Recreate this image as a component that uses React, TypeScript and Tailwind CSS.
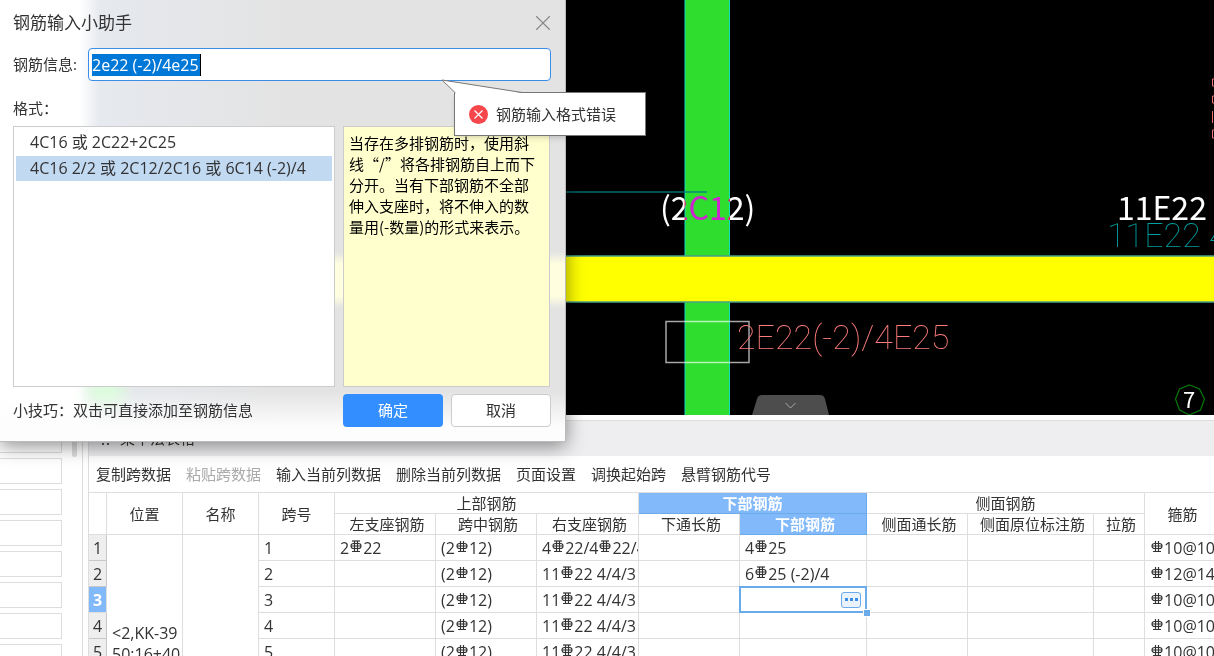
import { X } from "lucide-react";

const tools = [
    { label: "复制跨数据" },
    { label: "粘贴跨数据", disabled: true },
    { label: "输入当前列数据" },
    { label: "删除当前列数据" },
    { label: "页面设置" },
    { label: "调换起始跨" },
    { label: "悬臂钢筋代号" },
];

// "#" is the grade C sign, "$" the grade E sign
const rows = [
    { left: "2$22", mid: "(2#12)", right: "4$22/4$22/4", bottom: "4$25", stirrup: "#10@100" },
    { left: "", mid: "(2#12)", right: "11$22 4/4/3", bottom: "6$25 (-2)/4", stirrup: "#12@140" },
    { left: "", mid: "(2#12)", right: "11$22 4/4/3", bottom: "", stirrup: "#10@100" },
    { left: "", mid: "(2#12)", right: "11$22 4/4/3", bottom: "", stirrup: "#10@100" },
    { left: "", mid: "(2#12)", right: "11$22 4/4/3", bottom: "", stirrup: "#10@100" },
    { left: "", mid: "(2#12)", right: "11$22 4/4/3", bottom: "", stirrup: "#10@100" },
];

const activeRow = 2;

function RebarSign({ top }: { top: boolean }) {
    return (
        <svg className="inline-block w-3 h-[13px] mx-px align-[1px]" viewBox="0 0 12 13" fill="none" stroke="#333" strokeWidth="1.2">
            <rect x="1" y="3.5" width="10" height="5" rx="2.5" />
            <path d="M4.5 1V11.5M7.5 1V11.5M2 11.5H10M1 6H11" />
            {top && <path d="M2 1H10" />}
        </svg>
    );
}

function Rebar({ value }: { value: string }) {
    return (
        <>
            {value.split(/([#$])/).map((part, i) =>
                part === "#" || part === "$" ? <RebarSign key={i} top={part === "$"} /> : part
            )}
        </>
    );
}

function Canvas() {
    return (
        <div className="h-[415px] shrink-0 bg-black">
            <svg className="block w-full h-full">
                <rect x="597" width="45" height="100%" fill="#2edd2e" />
                <path d="M597 0V415M641.5 0V415" stroke="#14dcc0" />
                <path d="M0 192H619" stroke="#008080" strokeWidth="2" opacity="0.65" />
                <rect y="256" width="100%" height="46" fill="#ffff00" />
                <rect x="-10" y="256" width="1400" height="46" fill="none" stroke="#4aa08a" strokeWidth="1.5" />
                <rect x="578" y="321.5" width="83" height="41" fill="none" stroke="#fff" strokeWidth="1.5" opacity="0.65" />

                <g className="font-['Roboto'] font-thin text-[34px]">
                    <text x="649" y="349" fill="#ff7c7c">2E22(-2)/4E25</text>
                    <text x="1019" y="247" fill="#00a0a0">11E22 4</text>
                </g>
                <g className="font-['Noto_Sans_CJK_SC','Noto_Sans',sans-serif] text-[32px] mix-blend-difference" fill="#fff">
                    <text x="572" y="220">(2C12)</text>
                    <text x="1029" y="220">11E22 4</text>
                </g>
                <path d="M1128 79H1124.5V86H1128M1128 96H1124.5V103H1128M1124.5 111V123M1128 130H1124.5V138H1128" stroke="#f07070" fill="none" />

                <path d="M1101.500 385l10 4 5 10-4 11-11 5-10-5-4-11 4-10z" fill="none" stroke="#087808" strokeWidth="1.2" />
                <text x="1095" y="408" fill="#fff" className="font-['Noto_Sans_CJK_SC'] text-[22px]">7</text>

                <path d="M664 415l5-16q1-4 5-4h58q4 0 5 4l4 16z" fill="#4d4d4d" />
                <path d="M697.500 403l5 5 5-5" fill="none" stroke="#aaa" />
            </svg>
        </div>
    );
}

function SpanTable() {
    return (
        <table className="w-[1132px] table-fixed border-separate border-spacing-0 text-base leading-5 text-[#333] whitespace-nowrap [&_td]:h-[26px] [&_td]:p-0 [&_td]:border-r [&_td]:border-b [&_td]:border-[#dedede] [&_th]:p-0 [&_th]:border-r [&_th]:border-b [&_th]:border-[#dedede] [&_th]:font-normal">
            <colgroup>
                <col className="w-[18px]" />
                <col className="w-[76px]" />
                <col className="w-[76px]" />
                <col className="w-[76px]" />
                <col className="w-[101px]" />
                <col className="w-[101px]" />
                <col className="w-[102px]" />
                <col className="w-[101px]" />
                <col className="w-[127px]" />
                <col className="w-[101px]" />
                <col className="w-[126px]" />
                <col className="w-[51px]" />
                <col className="w-[76px]" />
            </colgroup>
            <thead className="text-[15px]">
                <tr className="h-[21px]">
                    <th rowSpan={2}></th>
                    <th rowSpan={2}>位置</th>
                    <th rowSpan={2}>名称</th>
                    <th rowSpan={2}>跨号</th>
                    <th colSpan={3}>上部钢筋</th>
                    <th colSpan={2} className="bg-[#82b9fb] text-white border-[#6cabea]! font-bold!">下部钢筋</th>
                    <th colSpan={3}>侧面钢筋</th>
                    <th rowSpan={2}>箍筋</th>
                </tr>
                <tr className="h-[21px] [&_th]:pl-1">
                    <th>左支座钢筋</th>
                    <th>跨中钢筋</th>
                    <th>右支座钢筋</th>
                    <th>下通长筋</th>
                    <th className="bg-[#82b9fb] text-white border-[#6cabea]! font-bold!">下部钢筋</th>
                    <th>侧面通长筋</th>
                    <th>侧面原位标注筋</th>
                    <th>拉筋</th>
                </tr>
            </thead>
            <tbody>
                {rows.map((row, i) => (
                    <tr key={i}>
                        <th className={i === activeRow ? "bg-[#82b9fb] text-white font-bold!" : "bg-[#eeeeee] border-[#c8c8c8]!"}>{i + 1}</th>
                        {i === 0 && (
                            <>
                                <td rowSpan={rows.length} className="align-top">
                                    <div className="pt-[88px] pl-[5px] leading-[21px]">&lt;2,KK-39<br />50:16+40</div>
                                </td>
                                <td rowSpan={rows.length}></td>
                            </>
                        )}
                        <td><div className="pl-[5px]">{i + 1}</div></td>
                        <td><div className="pl-[5px]"><Rebar value={row.left} /></div></td>
                        <td><div className="pl-[5px]"><Rebar value={row.mid} /></div></td>
                        <td><div className="pl-[5px] overflow-hidden"><Rebar value={row.right} /></div></td>
                        <td></td>
                        {i === activeRow ? (
                            <td className="relative">
                                <div className="absolute -inset-px border-2 border-[#6cabea] flex items-center justify-end pr-1">
                                    <button aria-label="更多" className="w-5 h-4 flex items-center justify-center gap-[2px] rounded-[3px] border border-[#6cabea] bg-[#eaf2fc]">
                                        <span className="w-[3px] h-[3px] bg-[#3b8ee8]" />
                                        <span className="w-[3px] h-[3px] bg-[#3b8ee8]" />
                                        <span className="w-[3px] h-[3px] bg-[#3b8ee8]" />
                                    </button>
                                </div>
                                <span className="absolute -right-1 -bottom-1 w-[6px] h-[6px] bg-[#6cabea] outline outline-white" />
                            </td>
                        ) : (
                            <td><div className="pl-[5px]"><Rebar value={row.bottom} /></div></td>
                        )}
                        <td></td>
                        <td></td>
                        <td></td>
                        <td><div className="pl-[5px] overflow-hidden"><Rebar value={row.stirrup} /></div></td>
                    </tr>
                ))}
            </tbody>
        </table>
    );
}

function ErrorTip() {
    return (
        <div role="alert" className="absolute left-[454px] top-[92px] w-48 h-11 flex items-center gap-2 pl-[14px] bg-white border border-[#777] shadow-md text-[15px] text-[#333]">
            <svg className="absolute left-[-14px] top-[-14px] w-24 h-4" viewBox="0 0 96 16">
                <path d="M16 16L1 1L81 14V16z" fill="#fff" />
                <path d="M14.500 14L1 1L81 13.500" fill="none" stroke="#777" />
            </svg>
            <svg className="w-[19px] h-[19px]" viewBox="0 0 19 19">
                <circle cx="9.500" cy="9.500" r="9.500" fill="#f5464b" />
                <path d="M5.500 5.500l8 8M13.500 5.500l-8 8" stroke="#fff" strokeWidth="1.200" />
            </svg>
            钢筋输入格式错误
        </div>
    );
}

function Helper() {
    return (
        <div role="dialog" aria-label="钢筋输入小助手" className="absolute left-0 top-0 w-[566px] h-[442px] border-r border-b border-[#bbb] bg-[#e3e3e3] shadow-[0_4px_18px_rgba(0,0,0,0.45)] text-[15px] text-[#333]">
            {/* frosted look of the panels below the window */}
            <div className="absolute inset-0 overflow-hidden">
                <div className="absolute inset-0 bg-linear-to-r from-white from-[80px] via-[#e6e9ee] via-[100px] to-[#e3e3e3] to-[290px]" />
                <div className="absolute left-[200px] -right-8 top-[258px] h-11 bg-[#ffffe0] blur-xs" />
                <div className="absolute left-[88px] top-[376px] w-9 h-8 bg-[#dcfbdc] blur-sm" />
                <div className="absolute inset-x-0 bottom-0 h-[50px] bg-linear-to-b from-transparent to-[#fdfdfd] to-[36px]" />
            </div>

            <div className="relative px-[13px]">
                <div className="h-12 pb-[2px] flex items-center justify-between">
                    <h1 className="text-[17px]">钢筋输入小助手</h1>
                    <button aria-label="关闭" className="-mr-1 text-[#888]"><X size={26} strokeWidth={1} /></button>
                </div>
                <div className="flex items-center">
                    <label htmlFor="info" className="w-[75px]">钢筋信息:</label>
                    <div className="flex-1 h-[33px] flex items-center px-[3px] mr-px rounded border border-[#3b8ee8] bg-white">
                        <input id="info" defaultValue="2e22 (-2)/4e25" className="w-[109px] h-[22px] border-r border-black bg-[#0078d7] text-base text-white outline-none" />
                    </div>
                </div>
                <div className="h-[45px] pt-[15px] leading-6">格式：</div>
                <div className="flex gap-2 mr-[2px]">
                    <ul className="w-[322px] h-[261px] p-[2px] border border-[#ccc] bg-white text-base">
                        <li className="h-[27px] pl-[14px] leading-[26px]">4C16 或 2C22+2C25</li>
                        <li className="h-[25px] pl-[14px] leading-[25px] bg-[#c2d9f2]">4C16 2/2 或 2C12/2C16 或 6C14 (-2)/4</li>
                    </ul>
                    <p className="flex-1 h-[261px] pl-[5px] pt-[5px] border border-[#ccc] bg-[#ffffce] font-['Noto_Sans_CJK_SC',sans-serif] leading-[21px] text-black whitespace-nowrap">
                        当存在多排钢筋时，使用斜<br />
                        线“/”将各排钢筋自上而下<br />
                        分开。当有下部钢筋不全部<br />
                        伸入支座时，将不伸入的数<br />
                        量用(-数量)的形式来表示。
                    </p>
                </div>
                <div className="flex items-center mr-px pt-[7px]">
                    <span className="flex-1">小技巧：双击可直接添加至钢筋信息</span>
                    <button className="w-[100px] h-[33px] rounded bg-[#338fff] text-white">确定</button>
                    <button className="w-[100px] h-[33px] ml-2 rounded border border-[#ccc] bg-white">取消</button>
                </div>
            </div>
        </div>
    );
}

export default function App() {
    return (
        <div className="relative h-screen flex overflow-hidden bg-white font-['Open_Sans','Noto_Sans_CJK_SC',sans-serif] text-[#333]">
            <aside className="w-[83px] shrink-0 border-r border-[#ddd] pt-[427px] flex">
                <div className="w-[62px] flex flex-col gap-[5px]">
                    {rows.concat(rows.slice(0, 2)).map((_, i) => (
                        <input key={i} readOnly aria-label={`属性 ${i + 1}`} className="w-full h-[26px] shrink-0 border border-l-0 border-[#ddd]" />
                    ))}
                </div>
                <div className="w-[5px] h-[30px] ml-[10px] rounded-full bg-[#ddd]" />
            </aside>
            <main className="flex-1 min-w-0 flex flex-col ml-[5px]">
                <Canvas />
                <section className="mt-[5px] border-l border-t border-[#ddd]">
                    <header className="h-[35px] pl-[11px] flex items-center gap-2 bg-[#eeeef0] text-[15px]">
                        <svg className="w-3 h-3" viewBox="0 0 12 12" fill="#555">
                            <path d="M2 2h2v2h-2zM7 2h2v2h-2zM2 6h2v2h-2zM7 6h2v2h-2zM2 10h2v2h-2zM7 10h2v2h-2z" />
                        </svg>
                        梁平法表格
                    </header>
                    <nav className="h-[37px] pl-[7px] flex items-center gap-[15px] border-b border-[#dedede] text-[15px] whitespace-nowrap">
                        {tools.map((tool) => (
                            <button key={tool.label} disabled={tool.disabled} className="disabled:text-[#aaa]">{tool.label}</button>
                        ))}
                    </nav>
                    <div className="overflow-hidden">
                        <SpanTable />
                    </div>
                </section>
            </main>
            <Helper />
            <ErrorTip />
        </div>
    );
}
